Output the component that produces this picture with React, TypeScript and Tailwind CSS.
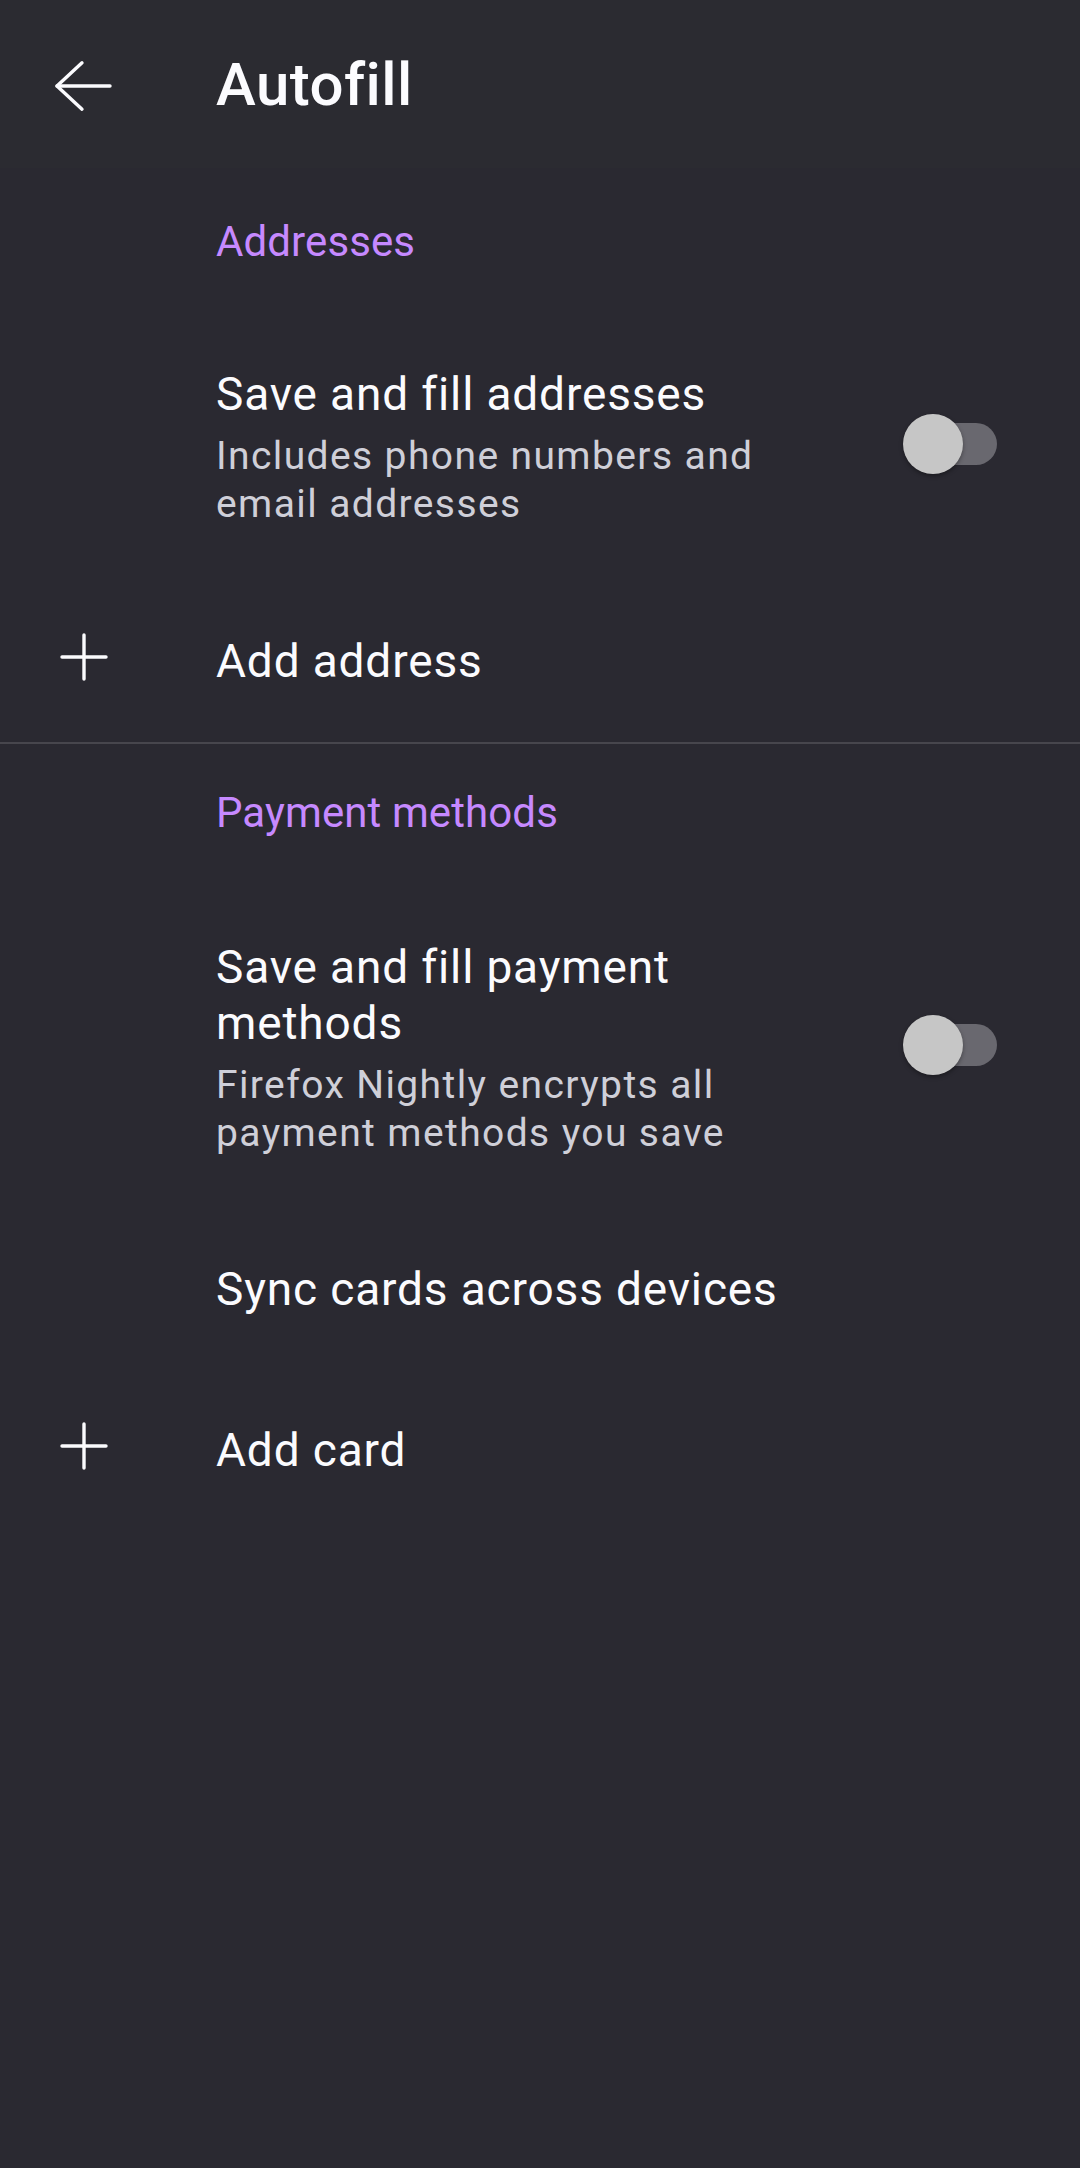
import React from 'react';

const BackArrow = () => (
  <svg width="60" height="60" viewBox="0 0 60 60" fill="none" stroke="#fbfbfe" strokeWidth="3.4" strokeLinecap="round" strokeLinejoin="round">
    <path d="M57 30H4" />
    <path d="M29 6.8L4 30l25 23.2" />
  </svg>
);

const PlusIcon = () => (
  <svg width="48" height="48" viewBox="0 0 48 48" fill="none" stroke="#fbfbfe" strokeWidth="3.4" strokeLinecap="round">
    <path d="M24 2v44" />
    <path d="M2 24h44" />
  </svg>
);

const Toggle = () => (
  <div className="relative w-[94px] h-[60px] shrink-0 mb-[6px]">
    <div className="absolute right-0 top-[9px] w-[84px] h-[42px] rounded-full bg-[#69686f]" />
    <div className="absolute left-0 top-0 w-[60px] h-[60px] rounded-full bg-[#c6c6c6] shadow-[0_2px_4px_rgba(0,0,0,0.35)]" />
  </div>
);

const SectionTitle = ({ children, className = '' }: { children: React.ReactNode; className?: string }) => (
  <div className={`pl-[216px] text-[42px] leading-[56px] tracking-[0.1px] text-[#c689ff] ${className}`}>
    {children}
  </div>
);

const SwitchRow = ({ title, summary, className = '' }: { title: string; summary: string; className?: string }) => (
  <div className={`flex items-center pl-[216px] pr-[83px] ${className}`}>
    <div className="w-[587px] shrink-0">
      <div className="text-[46px] leading-[56px] tracking-[0.85px] text-[#fbfbfe]">{title}</div>
      <div className="mt-[10px] text-[39px] leading-[48px] tracking-[1.4px] text-[#cfcfd8]">{summary}</div>
    </div>
    <div className="flex-1" />
    <Toggle />
  </div>
);

const IconRow = ({ label, className = '' }: { label: string; className?: string }) => (
  <div className={`flex items-center ${className}`}>
    <div className="w-[216px] shrink-0 pl-[60px] flex items-center">
      <div className="-mt-[8px]">
        <PlusIcon />
      </div>
    </div>
    <div className="text-[46px] leading-[58px] tracking-[0.85px] text-[#fbfbfe]">{label}</div>
  </div>
);

export default function App() {
  return (
    <div
      className="min-h-screen w-full bg-[#2a2931]"
      style={{ fontFamily: 'Roboto, "Noto Sans", sans-serif' }}
    >
      {/* Toolbar */}
      <header className="h-[168px] bg-[#2b2b31] flex items-center pt-[4px]">
        <div className="w-[216px] shrink-0 pl-[53px] flex items-center">
          <BackArrow />
        </div>
        <h1 className="-mt-[2px] text-[60px] leading-none font-medium tracking-[0.45px] text-[#fbfbfe]">
          Autofill
        </h1>
      </header>

      {/* Addresses */}
      <SectionTitle className="pt-[46px]">Addresses</SectionTitle>
      <SwitchRow
        className="mt-[96px]"
        title="Save and fill addresses"
        summary="Includes phone numbers and email addresses"
      />
      <IconRow className="mt-[104px]" label="Add address" />

      <div className="mt-[52px] h-[2px] bg-[#47464d]" />

      {/* Payment methods */}
      <SectionTitle className="mt-[41px]">Payment methods</SectionTitle>
      <SwitchRow
        className="mt-[98px]"
        title="Save and fill payment methods"
        summary="Firefox Nightly encrypts all payment methods you save"
      />
      <div className="mt-[103px] pl-[216px] text-[46px] leading-[58px] tracking-[0.85px] text-[#fbfbfe]">
        Sync cards across devices
      </div>
      <IconRow className="mt-[103px]" label="Add card" />
    </div>
  );
}
